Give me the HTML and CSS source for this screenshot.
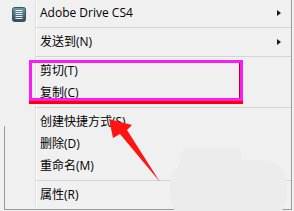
FILE: index.html
```html
<!DOCTYPE html>
<html>
<head>
<meta charset="utf-8">
<link rel="stylesheet" href="styles.css">
</head>
<body>
<div class="menu">
  <div class="item">
    <span class="gutter">
      <svg class="icon" width="14" height="15" viewBox="0 0 14 15">
        <defs>
          <linearGradient id="g" x1="0" y1="0" x2="0" y2="1">
            <stop offset="0" stop-color="#6f9aa8"/>
            <stop offset="1" stop-color="#2d4b57"/>
          </linearGradient>
        </defs>
        <rect x="0.5" y="0.5" width="13" height="14" rx="2" fill="url(#g)" stroke="#3a5560"/>
        <g stroke="#e8f0f2" stroke-width="1">
          <line x1="3.5" y1="3.5" x2="10.5" y2="3.5"/>
          <line x1="3.5" y1="5.5" x2="10.5" y2="5.5"/>
          <line x1="3.5" y1="7.5" x2="10.5" y2="7.5"/>
          <line x1="3.5" y1="9.5" x2="10.5" y2="9.5"/>
          <line x1="3.5" y1="11.5" x2="10.5" y2="11.5"/>
        </g>
      </svg>
    </span>
    <span class="label">Adobe Drive CS4</span>
    <span class="sub"></span>
  </div>
  <div class="sep"></div>
  <div class="item"><span class="gutter"></span><span class="label">发送到(N)</span><span class="sub"></span></div>
  <div class="sep"></div>
  <div class="item"><span class="gutter"></span><span class="label">剪切(T)</span></div>
  <div class="item"><span class="gutter"></span><span class="label">复制(C)</span></div>
  <div class="sep"></div>
  <div class="item"><span class="gutter"></span><span class="label">创建快捷方式(S)</span></div>
  <div class="item"><span class="gutter"></span><span class="label">删除(D)</span></div>
  <div class="item"><span class="gutter"></span><span class="label">重命名(M)</span></div>
  <div class="sep"></div>
  <div class="item"><span class="gutter"></span><span class="label">属性(R)</span></div>
</div>
<div class="blob blob-a"></div>
<div class="blob blob-b"></div>
<div class="highlight"></div>
<svg class="arrow" width="294" height="211" viewBox="0 0 294 211">
  <polygon points="109,119 132,125 127,130 160,182 120,134 113,138" fill="#ff1414"/>
</svg>
</body>
</html>
```
FILE: styles.css
```css
html, body {
  margin: 0;
  padding: 0;
}
body {
  width: 294px;
  height: 211px;
  overflow: hidden;
  background: #f0f0f0;
  font-family: "Open Sans", "Noto Sans CJK SC", sans-serif;
  font-size: 12px;
  color: #000;
  position: relative;
}
.menu {
  position: relative;
  margin-left: 5px;
  width: 286px;
  padding: 2px 0 3px 0;
  border-right: 1px solid #9a9a9a;
  border-bottom: 1px solid #9a9a9a;
  background-image: linear-gradient(to right, transparent 30px, #dedede 30px, #dedede 31px, #ffffff 31px, #ffffff 32px, transparent 32px);
  background-origin: content-box;
  background-clip: content-box;
}
.menu::before {
  content: "";
  position: absolute;
  left: -1px;
  top: 126px;
  bottom: -1px;
  width: 1px;
  background: #9a9a9a;
}
.item {
  display: flex;
  align-items: center;
  height: 22px;
  white-space: nowrap;
}
.gutter {
  width: 35px;
  flex: none;
  display: flex;
  align-items: center;
}
.icon {
  display: block;
  margin-left: 7px;
  margin-top: 3px;
}
.label {
  flex: 1;
  line-height: 22px;
}
.sub {
  flex: none;
  width: 0;
  height: 0;
  border-left: 4px solid #1a1a1a;
  border-top: 3.5px solid transparent;
  border-bottom: 3.5px solid transparent;
  margin-right: 10px;
}
.sep {
  height: 1px;
  background: #d5d5d5;
  margin: 3px 0 3px 31px;
}
.highlight {
  position: absolute;
  left: 29px;
  top: 60px;
  width: 214px;
  height: 41px;
  box-sizing: border-box;
  border: 3px solid #f61ef2;
  box-shadow: 0 3px 0 0 #ff0000, inset -1px 0 0 #c00010;
}
.arrow {
  position: absolute;
  left: 0;
  top: 0;
  pointer-events: none;
}
.blob {
  position: absolute;
  background: #ececec;
}
.blob-a {
  left: 170px;
  top: 160px;
  width: 117px;
  height: 60px;
  border-radius: 24px;
}
.blob-b {
  left: 180px;
  top: 148px;
  width: 62px;
  height: 30px;
  border-radius: 8px;
}
```
